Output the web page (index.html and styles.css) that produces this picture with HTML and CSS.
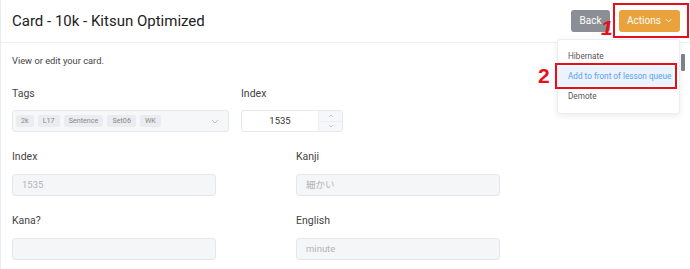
FILE: index.html
```html
<!DOCTYPE html>
<html lang="en">
<head>
    <meta charset="UTF-8">
    <title>Card - 10k - Kitsun Optimized</title>
    <link rel="stylesheet" href="styles.css">
</head>
<body>
    <div class="page">
        <div class="page-header">
            <h1 class="page-title">Card - 10k - Kitsun Optimized</h1>
            <div class="header-actions">
                <button class="btn btn-back">Back</button>
                <div class="actions-wrap">
                    <button class="btn btn-actions">Actions
                        <svg width="8" height="5" viewBox="0 0 8 5"><path d="M1 1l3 3 3-3" fill="none" stroke="#fff" stroke-width="1"/></svg>
                    </button>
                    <span class="mark mark-box-1"></span>
                    <span class="mark-num mark-num-1">1</span>
                    <ul class="dropdown">
                        <li class="dropdown-item">Hibernate</li>
                        <li class="dropdown-item active">Add to front of lesson queue</li>
                        <li class="dropdown-item">Demote</li>
                    </ul>
                    <span class="mark mark-box-2"></span>
                    <span class="mark-num mark-num-2">2</span>
                    <span class="scroll-thumb"></span>
                </div>
            </div>
        </div>

        <div class="page-body">
            <p class="intro">View or edit your card.</p>

            <div class="row-top">
                <div class="field field-tags">
                    <label class="field-label">Tags</label>
                    <div class="tag-select">
                        <span class="tag">2k</span>
                        <span class="tag">L17</span>
                        <span class="tag">Sentence</span>
                        <span class="tag">Set06</span>
                        <span class="tag">WK</span>
                        <svg class="select-caret" width="8" height="5" viewBox="0 0 8 5"><path d="M1 1l3 3 3-3" fill="none" stroke="#b8bcc3" stroke-width="1"/></svg>
                    </div>
                </div>
                <div class="field field-index">
                    <label class="field-label">Index</label>
                    <div class="number-input">
                        <span class="number-value">1535</span>
                        <div class="spinner">
                            <span class="spin"><svg width="6" height="4" viewBox="0 0 6 4"><path d="M1 3l2-2 2 2" fill="none" stroke="#b8bcc3" stroke-width="0.8"/></svg></span>
                            <span class="spin"><svg width="6" height="4" viewBox="0 0 6 4"><path d="M1 1l2 2 2-2" fill="none" stroke="#b8bcc3" stroke-width="0.8"/></svg></span>
                        </div>
                    </div>
                </div>
            </div>

            <div class="field-grid">
                <div class="field">
                    <label class="field-label">Index</label>
                    <div class="text-input">1535</div>
                </div>
                <div class="field">
                    <label class="field-label">Kanji</label>
                    <div class="text-input">細かい</div>
                </div>
                <div class="field">
                    <label class="field-label">Kana?</label>
                    <div class="text-input"></div>
                </div>
                <div class="field">
                    <label class="field-label">English</label>
                    <div class="text-input">minute</div>
                </div>
            </div>
        </div>
    </div>
</body>
</html>
```

FILE: styles.css
```css
body {
    margin: 0;
    padding: 0;
    background-color: #fff;
    font-family: Roboto, "Noto Sans CJK JP", sans-serif;
    color: #333;
}
.page {
    border-left: 1px solid #ebecef;
    height: 269px;
    overflow: hidden;
}
.page-header {
    display: flex;
    justify-content: space-between;
    align-items: center;
    height: 42px;
    padding: 0 10px 0 11px;
    border-bottom: 1px solid #eff0f2;
}
.page-title {
    margin: 0;
    font-size: 15px;
    font-weight: 400;
    color: #222;
}
.header-actions {
    display: flex;
    align-items: center;
    gap: 9px;
    margin-top: -1px;
}
.btn {
    height: 22px;
    border: none;
    border-radius: 3px;
    color: #fff;
    font-family: Roboto, sans-serif;
    font-size: 10px;
    padding: 0 8px;
}
.btn-back {
    background-color: #8b8e94;
    width: 39px;
}
.btn-actions {
    background-color: #e9a23c;
    width: 61px;
    display: flex;
    align-items: center;
    justify-content: center;
    gap: 4px;
}
.actions-wrap {
    position: relative;
}
.mark {
    position: absolute;
    border: 2px solid #e6101c;
    box-sizing: border-box;
}
.mark-box-1 {
    left: -6px;
    top: -7px;
    width: 76px;
    height: 35px;
}
.mark-num {
    position: absolute;
    color: #e6101c;
    font-family: "Liberation Sans", sans-serif;
    font-weight: bold;
    font-size: 21px;
    line-height: 21px;
}
.mark-num-1 {
    left: -18px;
    top: 7px;
    font-style: italic;
}
.mark-num-2 {
    left: -81px;
    top: 55px;
}
.mark-box-2 {
    left: -64px;
    top: 53px;
    width: 122px;
    height: 26px;
}
.dropdown {
    position: absolute;
    left: -62px;
    top: 29px;
    width: 123px;
    margin: 0;
    padding: 6px 0 7px;
    list-style: none;
    background: #fff;
    border: 1px solid #eceef1;
    border-radius: 3px;
    box-shadow: 0 2px 6px rgba(0, 0, 0, 0.08);
    box-sizing: border-box;
}
.dropdown-item {
    height: 20px;
    line-height: 20px;
    padding: 0 10px;
    font-size: 8.2px;
    color: #555;
    white-space: nowrap;
}
.dropdown-item.active {
    background-color: #eaf3fe;
    color: #5e9ef2;
    margin-right: 6px;
}
.scroll-thumb {
    position: absolute;
    left: 62px;
    top: 44px;
    width: 4px;
    height: 17px;
    background: #7a818c;
    border-radius: 1px;
}
.page-body {
    padding: 11px 11px 0;
}
.intro {
    margin: 0 0 19px;
    font-size: 9.3px;
    line-height: 14px;
    color: #444;
}
.row-top {
    display: flex;
    gap: 12px;
    margin-bottom: 18px;
}
.field {
    display: flex;
    flex-direction: column;
}
.field-label {
    font-size: 10.5px;
    line-height: 14px;
    color: #444;
    margin-bottom: 9px;
}
.field-grid .field-label {
    margin-bottom: 10px;
}
.field-tags {
    width: 217px;
}
.tag-select {
    display: flex;
    align-items: center;
    gap: 4px;
    height: 22px;
    padding: 0 3px;
    border: 1px solid #e6e8eb;
    border-radius: 3px;
    background: #f6f7f9;
    box-sizing: border-box;
}
.tag {
    height: 12px;
    line-height: 12px;
    padding: 0 5px;
    background: #eaecef;
    border-radius: 2px;
    font-size: 7.2px;
    color: #888;
}
.select-caret {
    margin-left: auto;
    margin-right: 6px;
}
.field-index {
    width: 102px;
}
.number-input {
    display: flex;
    height: 22px;
    border: 1px solid #e6e8eb;
    border-radius: 3px;
    background: #fff;
    box-sizing: border-box;
}
.number-value {
    flex: 1;
    text-align: center;
    font-size: 9.5px;
    line-height: 20px;
    color: #333;
}
.spinner {
    width: 23px;
    display: flex;
    flex-direction: column;
    border-left: 1px solid #eceef1;
}
.spin {
    flex: 1;
    display: flex;
    align-items: center;
    justify-content: center;
    background: #f6f7f9;
}
.spin + .spin {
    border-top: 1px solid #eceef1;
}
.field-grid {
    display: grid;
    grid-template-columns: 204px 204px;
    column-gap: 80px;
    row-gap: 18px;
}
.text-input {
    height: 22px;
    padding: 0 9px;
    border: 1px solid #e6e8eb;
    border-radius: 3px;
    background: #f5f6f8;
    box-sizing: border-box;
    font-size: 9.5px;
    line-height: 20px;
    color: #b4b4b4;
}
```
